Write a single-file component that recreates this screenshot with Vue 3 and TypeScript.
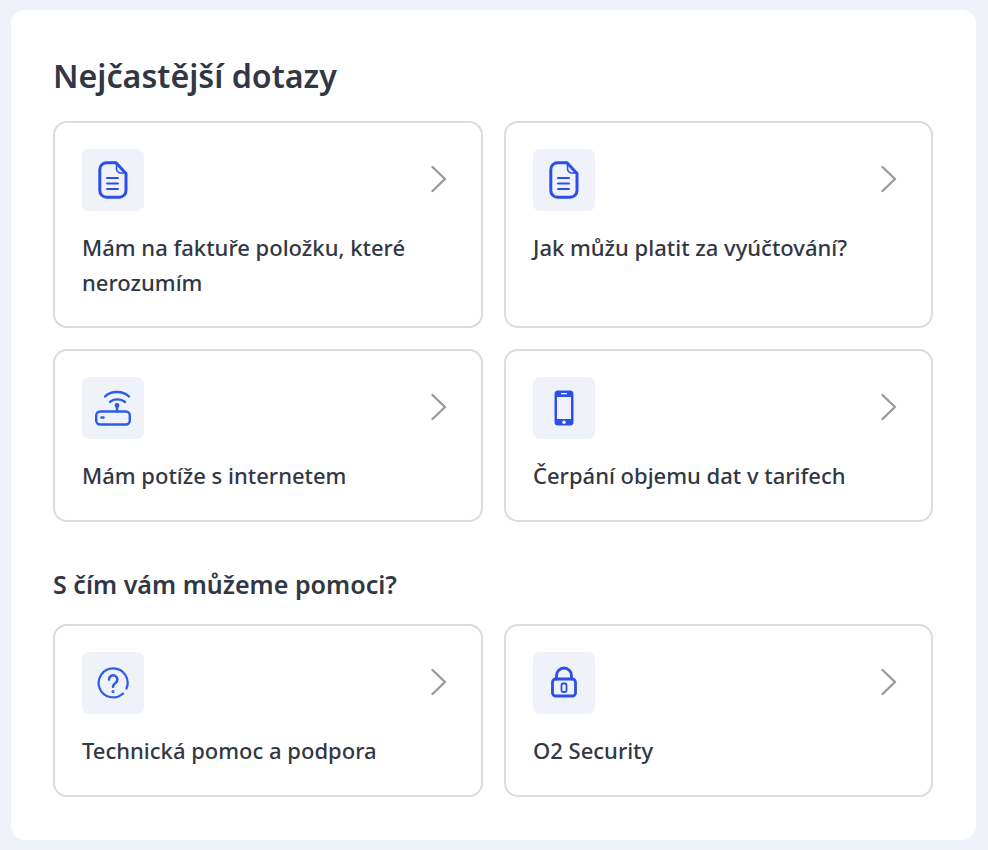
<script setup lang="ts">
type Topic = { label: string; icon: string }

const faq: Topic[] = [
  { label: "Mám na faktuře položku, které nerozumím", icon: "doc" },
  { label: "Jak můžu platit za vyúčtování?", icon: "doc" },
  { label: "Mám potíže s internetem", icon: "router" },
  { label: "Čerpání objemu dat v tarifech", icon: "phone" },
]

const help: Topic[] = [
  { label: "Technická pomoc a podpora", icon: "question" },
  { label: "O2 Security", icon: "lock" },
]

const sections = [
  { title: "Nejčastější dotazy", main: true, items: faq },
  { title: "S čím vám můžeme pomoci?", main: false, items: help },
]
</script>

<template>
  <main class="panel">
    <section v-for="section in sections" :key="section.title" class="block">
      <h2 :class="section.main ? 'title-main' : 'title-sub'">{{ section.title }}</h2>
      <div class="grid">
        <a v-for="item in section.items" :key="item.label" class="tile" href="#">
          <div class="tile-top">
            <span class="icon-box">
              <svg v-if="item.icon === 'doc'" width="30" height="38" viewBox="0 0 30 38" fill="none" stroke="#2b4fe8" stroke-width="3" stroke-linecap="round" stroke-linejoin="round">
                <path d="M8.500 1.800H18L28 12.500V29.500a6.700 6.700 0 0 1-6.700 6.700H8.500a6.700 6.700 0 0 1-6.700-6.700V8.500a6.700 6.700 0 0 1 6.700-6.700z" />
                <path d="M18.500 3v4.500a4.500 4.500 0 0 0 4.500 4.500h4" stroke-width="1.600" />
                <path d="M9 17h11M9 22.500h11M9 28h11" stroke-width="2" />
              </svg>
              <svg v-else-if="item.icon === 'router'" width="36" height="36" viewBox="0 0 36 36" fill="none" stroke="#2b5be8" stroke-width="2.400" stroke-linecap="round" stroke-linejoin="round">
                <path d="M10 6.500C16 0.500 28 0.500 34 6.500" />
                <path d="M15 12c3.500-3.500 11-3.500 15 0" />
                <circle cx="22" cy="15.500" r="1.200" />
                <path d="M22 16.500v5" />
                <rect x="1.200" y="21.500" width="33.600" height="13" rx="4" />
                <path d="M6.500 27.500h2" />
              </svg>
              <svg v-else-if="item.icon === 'phone'" width="20" height="36" viewBox="0 0 20 36" fill="none">
                <rect x="0.500" y="0.500" width="19" height="35" rx="3.500" fill="#2b4fe8" />
                <rect x="3" y="7" width="14" height="22" fill="#f0f2fa" />
                <circle cx="10" cy="32.300" r="1.700" fill="#fff" />
                <path d="M7.500 3.700h5" stroke="#fff" stroke-width="1.200" stroke-linecap="round" />
              </svg>
              <svg v-else-if="item.icon === 'question'" width="32" height="32" viewBox="0 0 32 32" fill="none" stroke="#2b5be8" stroke-width="2.200" stroke-linecap="round" stroke-linejoin="round">
                <path d="M26 26.500A14.500 14.500 0 1 1 29.500 21.500" />
                <path d="M12 12.500a4.200 4.200 0 1 1 6.500 3.500c-1.500 1-2.500 1.800-2.500 3.800" stroke-width="2.600" />
                <circle cx="16" cy="24.500" r="0.600" stroke-width="2" />
              </svg>
              <svg v-else class="lock" width="26" height="32" viewBox="0 0 26 32" fill="none" stroke="#2b4fe8" stroke-width="2.800" stroke-linecap="round" stroke-linejoin="round">
                <rect x="1.500" y="13" width="23" height="17" rx="3" />
                <path d="M5.500 13V9.500a7.500 7.500 0 0 1 15 0V13" />
                <rect x="10.500" y="17.500" width="5" height="8.500" rx="1.500" stroke-width="1.800" />
              </svg>
            </span>
            <svg class="chevron" width="18" height="28" viewBox="0 0 18 28" fill="none" stroke="#9a9a9a" stroke-width="2.400" stroke-linecap="round" stroke-linejoin="round">
              <path d="M2.500 2l12.500 12L2.500 26" />
            </svg>
          </div>
          <p class="tile-text">{{ item.label }}</p>
        </a>
      </div>
    </section>
  </main>
</template>

<style>
html,
body {
  margin: 0;
  background: #f0f2fa;
}
</style>

<style scoped>
.panel {
  box-sizing: border-box;
  width: 965px;
  height: 830px;
  margin: 10px 0 0 11px;
  padding: 43px 43px 0 42px;
  background: #ffffff;
  border-radius: 14px;
  font-family: "Noto Sans", sans-serif;
  color: #323744;
}

.block + .block {
  margin-top: 44.500px;
}

.title-main {
  margin: 0 0 22px;
  font-size: 32.200px;
  line-height: 46px;
  font-weight: 600;
}

.title-sub {
  margin: 0 0 21px;
  font-size: 25.100px;
  line-height: 37px;
  font-weight: 600;
}

.grid {
  display: grid;
  grid-template-columns: 430px 429px;
  gap: 21px;
}

.tile {
  box-sizing: border-box;
  display: block;
  min-height: 172px;
  padding: 26px 27px 27px 27px;
  border: 2px solid #dcdcdc;
  border-radius: 14px;
  color: inherit;
  text-decoration: none;
}

.tile-top {
  display: flex;
  justify-content: space-between;
  align-items: flex-start;
}

.icon-box {
  display: flex;
  align-items: center;
  justify-content: center;
  width: 62px;
  height: 62px;
  background: #f0f2fa;
  border-radius: 7px;
}

.lock {
  margin-top: -2px;
}

.chevron {
  margin: 16px 6px 0 0;
}

.tile-text {
  margin: 19px 0 0;
  font-size: 22px;
  line-height: 34.500px;
  font-weight: 500;
}
</style>
